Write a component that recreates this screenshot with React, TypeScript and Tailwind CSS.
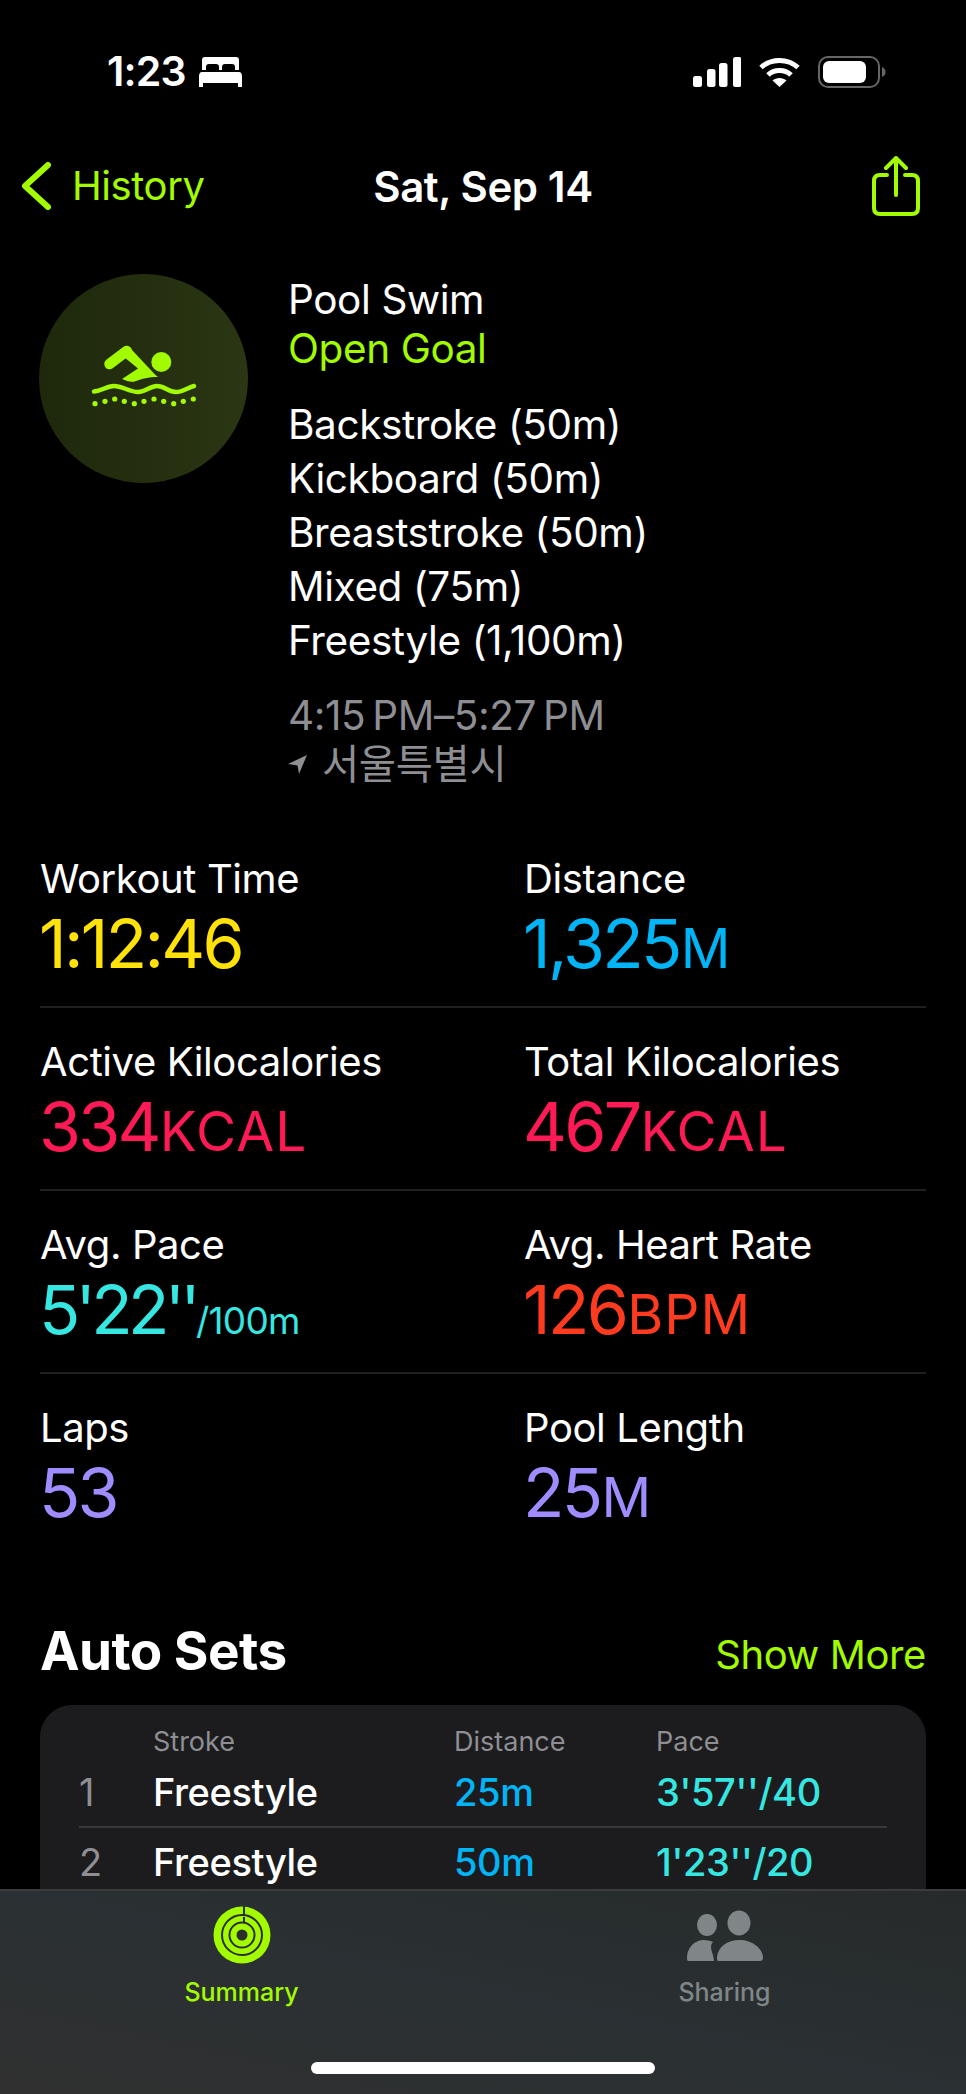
import React from "react";

const sans = "font-['Inter','Noto_Sans_CJK_KR',sans-serif]";

type Stat = {
  label: string;
  value: string;
  unit?: string;
  color: string;
  smallUnit?: boolean;
};

const rows: Stat[][] = [
  [
    { label: "Workout Time", value: "1:12:46", color: "text-[#ffe20a]" },
    { label: "Distance", value: "1,325", unit: "M", color: "text-[#00b4f5]" },
  ],
  [
    { label: "Active Kilocalories", value: "334", unit: "KCAL", color: "text-[#ff1a55]" },
    { label: "Total Kilocalories", value: "467", unit: "KCAL", color: "text-[#ff1a55]" },
  ],
  [
    { label: "Avg. Pace", value: "5'22''", unit: "/100m", color: "text-[#36e6e0]", smallUnit: true },
    { label: "Avg. Heart Rate", value: "126", unit: "BPM", color: "text-[#ff3b1f]" },
  ],
  [
    { label: "Laps", value: "53", color: "text-[#a08cff]" },
    { label: "Pool Length", value: "25", unit: "M", color: "text-[#a08cff]" },
  ],
];

const strokes = ["Backstroke (50m)", "Kickboard (50m)", "Breaststroke (50m)", "Mixed (75m)", "Freestyle (1,100m)"];

const sets = [
  { n: "1", stroke: "Freestyle", distance: "25m", pace: "3'57''/40" },
  { n: "2", stroke: "Freestyle", distance: "50m", pace: "1'23''/20" },
];

const StatCell = ({ stat }: { stat: Stat }) => (
  <div>
    <div className="text-[40px] leading-[50px] tracking-[-0.01em] text-white">{stat.label}</div>
    <div className={`mt-[4px] -ml-[1px] h-[70px] leading-[70px] whitespace-nowrap ${stat.color}`}>
      <span className={stat.smallUnit ? "text-[68px] tracking-[-0.07em]" : "text-[68px] tracking-[-0.04em]"}>{stat.value}</span>
      {stat.unit && (
        <span className={stat.smallUnit ? "text-[37px] tracking-[-0.02em]" : "ml-[1px] text-[55px] tracking-[0.02em]"}>
          {stat.unit}
        </span>
      )}
    </div>
  </div>
);

const SwimIcon = () => (
  <svg width="170" height="110" viewBox="0 0 170 110" fill="none">
    <circle cx="101.3" cy="42" r="10" fill="#a2fb00" />
    <path d="M49.5 44L66.7 31" stroke="#a2fb00" strokeWidth="10.5" strokeLinecap="round" />
    <path d="M63 30C66 26 70 27 72 30L95 54.5L98 57C88 57 82 59 76 61C71 63 67 61 62 59L78 48.5L64 37Z" fill="#a2fb00" />
    <path
      d="M34 71.5C42 71 46 66 54 66C62 66 70 72 78 72C86 72 90 66 97 66C105 66 108 72 116 72C122 72 127 68 134 66"
      stroke="#a2fb00"
      strokeWidth="4.5"
      strokeLinecap="round"
    />
    {[
      [35, 83.7], [45, 81.3], [54.7, 79], [64.3, 81.3], [74.3, 83.7], [84, 81.3],
      [94, 79], [103.7, 81.3], [113.7, 83.7], [123.3, 81.3], [133.3, 79],
    ].map(([cx, cy]) => (
      <circle key={cx} cx={cx} cy={cy} r="2.6" fill="#a2fb00" />
    ))}
  </svg>
);

const RingsIcon = () => (
  <svg width="58" height="58" viewBox="0 0 58 58">
    <circle cx="29" cy="29" r="28.5" fill="#a2fb00" />
    <circle cx="29" cy="29" r="20" fill="none" stroke="#2b2e2d" strokeWidth="2" />
    <circle cx="29" cy="29" r="12.5" fill="none" stroke="#2b2e2d" strokeWidth="2" />
    <circle cx="29" cy="29" r="5.5" fill="#2b2e2d" />
    <path d="M31 0V9M31 11V17" stroke="#2b2e2d" strokeWidth="2" />
  </svg>
);

const SharingIcon = () => (
  <svg width="78" height="52" viewBox="0 0 78 52" fill="#808688">
    <ellipse cx="21" cy="15" rx="10" ry="11" />
    <ellipse cx="53" cy="13" rx="11.5" ry="12.5" />
    <path d="M1 48C1 38 8 30 18 30C22 30 25 31 27 32C22 37 28 44 28 51H3C1 51 1 50 1 48Z" />
    <path d="M31 47C32 37 41 30 53.5 30C66 30 76 38 77 47C77 50 76 51 74 51H33C31 51 31 50 31 47Z" />
  </svg>
);

const StatusIcons = () => (
  <div className="flex items-center">
    <svg width="48" height="30" viewBox="0 0 48 30" fill="white">
      <rect x="0" y="19" width="9" height="11" rx="2.5" />
      <rect x="14" y="12" width="8.5" height="18" rx="2.5" />
      <rect x="26" y="6" width="8.5" height="24" rx="2.5" />
      <rect x="40" y="0" width="8.5" height="30" rx="2.5" />
    </svg>
    <svg className="ml-[18px]" width="41" height="30" viewBox="0 0 41 30" fill="none" stroke="white" strokeWidth="5">
      <path d="M2 10.5C12 1 29 1 39 10.5" />
      <path d="M9 18C15 12 26 12 32 18" />
      <path d="M20.5 30L13.5 23.5C17 20 24 20 27.5 23.5Z" fill="white" stroke="none" />
    </svg>
    <svg className="ml-[18px]" width="68" height="32" viewBox="0 0 68 32" fill="none">
      <rect x="1" y="1" width="60" height="30" rx="9" stroke="#666" strokeWidth="2" />
      <rect x="5" y="5" width="43" height="22" rx="6" fill="white" />
      <path d="M64 11C66.5 12 67.5 14 67.5 16C67.5 18 66.5 20 64 21Z" fill="#666" />
    </svg>
  </div>
);

const App = () => {
  return (
    <div className={`relative h-[2094px] w-[966px] overflow-hidden bg-black text-white ${sans}`}>
      {/* status bar */}
      <div className="mt-[44px] flex h-[56px] items-center justify-between pl-[107px] pr-[80px]">
        <div className="flex items-center">
          <span className="text-[41px] font-semibold tracking-[-0.02em]">1:23</span>
          <svg className="ml-[13px]" width="43" height="30" viewBox="0 0 43 30" fill="white">
            <path d="M6 0H37C39 0 40 1 40 3V13H36V10C36 8 35 7 33 7H26C24 7 23 8 23 10V13H20V10C20 8 19 7 17 7H10C8 7 7 8 7 10V13H3V3C3 1 4 0 6 0Z" />
            <path d="M3 15H40C42 15 43 17 43 19V30H39V26H4V30H0V19C0 17 1 15 3 15Z" />
          </svg>
        </div>
        <StatusIcons />
      </div>

      {/* nav */}
      <div className="mt-[54px] grid h-[64px] grid-cols-3 items-center px-[46px]">
        <div className="-ml-[24px] flex items-center text-[#a2fb00]">
          <svg width="30" height="48" viewBox="0 0 30 48" fill="none" stroke="#a2fb00" strokeWidth="6" strokeLinecap="round" strokeLinejoin="round">
            <path d="M26 3L3 24L26 45" />
          </svg>
          <span className="ml-[20px] text-[40px] tracking-[-0.01em]">History</span>
        </div>
        <div className="text-center text-[42px] font-semibold tracking-[-0.01em] whitespace-nowrap">Sat, Sep 14</div>
        <div className="flex justify-end">
          <svg width="48" height="60" viewBox="0 0 48 60" fill="none" stroke="#a2fb00" strokeWidth="4" strokeLinecap="round" strokeLinejoin="round">
            <path d="M15 19H8C4 19 2 21 2 25V52C2 56 4 58 8 58H40C44 58 46 56 46 52V25C46 21 44 19 40 19H33" />
            <path d="M24 39V3M14 12L24 2L34 12" />
          </svg>
        </div>
      </div>

      {/* workout header */}
      <div className="mt-[56px] flex px-[39px]">
        <div className="flex h-[209px] w-[209px] shrink-0 items-center justify-center rounded-full bg-gradient-to-r from-[#1e280b] to-[#2b3614]">
          <div className="-mt-[7px] ml-[3px]">
            <SwimIcon />
          </div>
        </div>
        <div className="ml-[40px] text-[40.5px] tracking-[-0.01em]">
          <div className="leading-[50px] pt-[1px] -mb-[1px]">Pool Swim</div>
          <div className="leading-[50px] text-[#a2fb00]">Open Goal</div>
          <div className="mt-[24px]">
            {strokes.map((s) => (
              <div key={s} className="leading-[54px]">{s}</div>
            ))}
          </div>
          <div className="mt-[24px] text-[#8e8e93]">
            <div className="leading-[48px] tracking-[-0.01em]">4:15{"\u202f"}PM–5:27{"\u202f"}PM</div>
            <div className="mt-[1px] flex items-center leading-[48px]">
              <svg width="20" height="20" viewBox="0 0 20 20" fill="#8e8e93">
                <path d="M19 0L11 19L9.5 10.5L0 9Z" />
              </svg>
              <span className="ml-[14px]">서울특별시</span>
            </div>
          </div>
        </div>
      </div>

      {/* stats */}
      <div className="mt-[36px] px-[40px]">
        {rows.map((row, i) => (
          <div
            key={row[0].label}
            className={`grid h-[183px] grid-cols-[484px_1fr] pt-[29px] ${i < rows.length - 1 ? "border-b-2 border-[#1f1f1f]" : ""}`}
          >
            {row.map((stat) => (
              <StatCell key={stat.label} stat={stat} />
            ))}
          </div>
        ))}
      </div>

      {/* auto sets */}
      <div className="mt-[60px] flex items-center justify-between px-[40px]">
        <span className="text-[53px] font-bold leading-[62px] tracking-[-0.01em]">Auto Sets</span>
        <span className="pt-[8px] text-[40px] tracking-[-0.01em] text-[#a2fb00]">Show More</span>
      </div>
      <div className="mx-[40px] mt-[20px] h-[300px] rounded-t-[32px] bg-[#1c1c1e] px-[39px] pt-[20px]">
        <div className="grid grid-cols-[74px_301px_202px_1fr] text-[27px] leading-[34px] text-[#8e8e93]">
          <span />
          <span>Stroke</span>
          <span>Distance</span>
          <span>Pace</span>
        </div>
        {sets.map((set, i) => (
          <div
            key={set.n}
            className={`grid h-[69px] grid-cols-[74px_301px_202px_1fr] items-center text-[38px] font-medium tracking-[-0.01em] ${i === 0 ? "border-b-2 border-[#38383a]" : ""}`}
          >
            <span className="font-normal text-[#8e8e93]">{set.n}</span>
            <span>{set.stroke}</span>
            <span className="text-[#00b4f5]">{set.distance}</span>
            <span className="text-[#36e6e0]">{set.pace}</span>
          </div>
        ))}
      </div>

      {/* tab bar */}
      <div className="absolute bottom-0 left-0 h-[205px] w-full border-t-2 border-[#3a3c3c] bg-gradient-to-tr from-[#303030] via-[#2a3033] to-[#262a2a]">
        <div className="grid grid-cols-2 pt-[15px]">
          <div className="flex flex-col items-center">
            <RingsIcon />
            <span className="mt-[10px] text-[25px] font-medium text-[#a2fb00]">Summary</span>
          </div>
          <div className="flex flex-col items-center">
            <div className="mt-[4px]">
              <SharingIcon />
            </div>
            <span className="mt-[12px] text-[25px] font-medium text-[#808688]">Sharing</span>
          </div>
        </div>
        <div className="absolute bottom-[20px] left-[311px] h-[12px] w-[344px] rounded-full bg-white" />
      </div>
    </div>
  );
};

export default App;
